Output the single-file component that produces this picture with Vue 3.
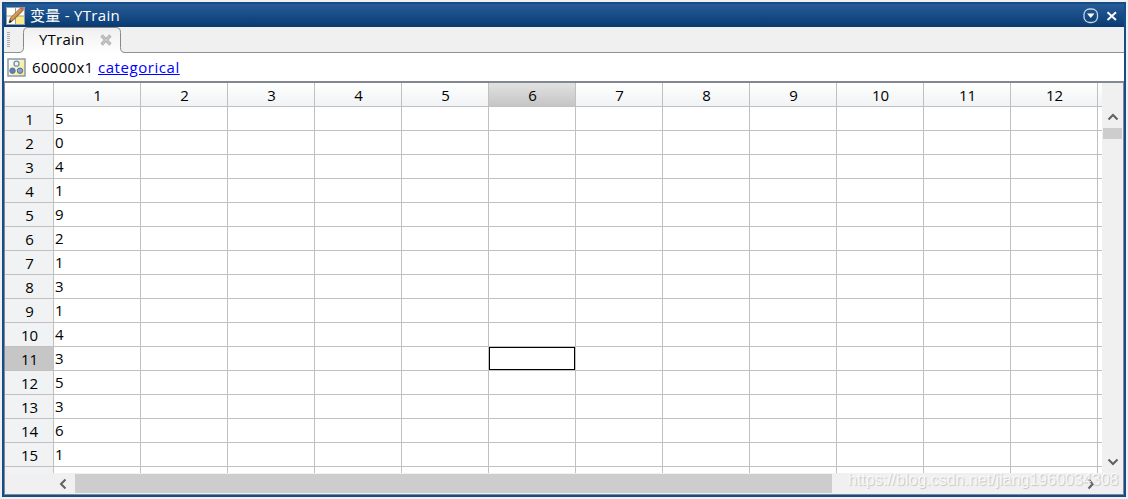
<template>
  <div class="desktop">
    <div class="window">
      <!-- Title bar -->
      <header class="titlebar">
        <svg class="title-icon" width="20" height="20" viewBox="0 0 20 20">
          <rect x="0.5" y="1.5" width="18" height="17" fill="#fffef0" stroke="#8ba0b0" />
          <path d="M10 10h8v8h-8z" fill="#fbe98a" />
          <path d="M1 10h17M9.500 2v16" stroke="#91a5a5" fill="none" />
          <path d="M3 16.500l1.500-4.500L14.500 2l2.500 2.500L7 14.500z" fill="#c98b43" stroke="#704524" stroke-width="0.8" />
          <path d="M5.500 12.500L15 3" stroke="#d9a35c" stroke-width="1.300" />
          <path d="M14 2.500l2-2 2.500 2.500-2 2z" fill="#c9676b" />
          <path d="M3 17l1-3 2 2z" fill="#222" />
        </svg>
        <span class="title-text">变量 - YTrain</span>
        <svg class="title-buttons" width="40" height="18" viewBox="0 0 40 18">
          <rect x="2" y="2" width="13.500" height="13.500" rx="5.500" fill="none" stroke="#c5d3e2" stroke-width="1.300" />
          <path d="M5 6.500h7.500L8.750 11z" fill="#fff" />
          <path d="M25.500 5.300l8.500 7.700M34 5.300l-8.500 7.700" stroke="#fff" stroke-width="1.900" />
        </svg>
      </header>

      <!-- Document tabs -->
      <nav class="tabs">
        <svg class="grip" width="4" height="16" viewBox="0 0 4 16">
          <path d="M1.500 0v16" stroke="#aaa" stroke-width="3" stroke-dasharray="1 1" />
        </svg>
        <div class="tab">
          <svg class="tab-shape" width="106" height="26" viewBox="0 0 106 26">
            <defs>
              <linearGradient id="tab-fill" x1="0" y1="0" x2="0" y2="1">
                <stop offset="0" stop-color="#efefef" />
                <stop offset="1" stop-color="#fff" />
              </linearGradient>
            </defs>
            <path
              d="M0 25.500c3-.3 4.500-1.500 4.500-5V5.500Q4.500 .5 9 .5H97Q101.500 .5 101.500 5.500V20.500c0 3.500 1.500 5 4.500 5V26H0z"
              fill="url(#tab-fill)"
            />
            <path
              d="M0 25.500c3-.3 4.500-1.500 4.500-5V5.500Q4.500 .5 9 .5H97Q101.500 .5 101.500 5.500V20.500c0 3.500 1.500 5 4.500 5"
              fill="none"
              stroke="#898989"
            />
          </svg>
          <span class="tab-label">YTrain</span>
          <svg class="tab-close" width="12" height="12" viewBox="0 0 12 12">
            <path d="M1.500 1.500l9 9M10.500 1.500l-9 9" stroke="#b4b4b4" stroke-width="3.200" />
            <path d="M2 2l8 8M10 2l-8 8" stroke="#cfcfcf" stroke-width="1" />
          </svg>
        </div>
      </nav>

      <!-- Variable summary -->
      <div class="summary">
        <svg width="19" height="19" viewBox="0 0 19 19">
          <defs>
            <linearGradient id="var-fill" x1="0" y1="0" x2="1" y2="0.6">
              <stop offset="0" stop-color="#fff" />
              <stop offset="1" stop-color="#fbe88e" />
            </linearGradient>
          </defs>
          <rect x="1" y="1" width="17" height="17" fill="url(#var-fill)" stroke="#8a9bad" stroke-width="1.500" />
          <circle cx="9.500" cy="5.700" r="2.500" fill="#edf5fb" stroke="#6d93bb" stroke-width="1.300" />
          <circle cx="5.500" cy="12.700" r="2.700" fill="#5e83b5" stroke="#4b6f9f" />
          <circle cx="13" cy="12.700" r="2.700" fill="#86a5ca" stroke="#4b6f9f" />
        </svg>
        <span class="size">60000x1</span>
        <a class="type">categorical</a>
      </div>

      <!-- Data grid with its scrollbars -->
      <main class="viewer">
        <div class="sheet">
          <div class="row head">
            <div class="corner"></div>
            <div v-for="col in columns" :key="col" class="cell" :class="{ active: col === activeCol }">
              {{ col }}
            </div>
            <div class="cell rest"></div>
          </div>
          <div v-for="(value, index) in values" :key="index" class="row">
            <div class="row-label" :class="{ active: index + 1 === activeRow }">{{ index + 1 }}</div>
            <div
              v-for="col in columns"
              :key="col"
              class="cell"
              :class="{ selected: index + 1 === activeRow && col === activeCol }"
            >
              {{ col === 1 ? value : '' }}
            </div>
            <div class="cell rest"></div>
          </div>
          <div class="row">
            <div class="row-label"></div>
            <div v-for="col in columns" :key="col" class="cell"></div>
            <div class="cell rest"></div>
          </div>
        </div>

        <div class="vbar">
          <svg width="12" height="8" viewBox="0 0 12 8"><path d="M1.500 6.500L6 2l4.500 4.500" /></svg>
          <div class="vthumb"></div>
          <svg class="down" width="12" height="8" viewBox="0 0 12 8"><path d="M1.500 1.500L6 6l4.500-4.500" /></svg>
        </div>

        <div class="hbar">
          <svg width="8" height="12" viewBox="0 0 8 12"><path d="M6.500 1.500L2 6l4.500 4.500" /></svg>
          <div class="hthumb"></div>
          <svg class="right" width="8" height="12" viewBox="0 0 8 12"><path d="M1.500 1.500L6 6l-4.500 4.500" /></svg>
        </div>
      </main>
    </div>
    <span class="watermark">https://blog.csdn.net/jiang1960034308</span>
  </div>
</template>

<script setup>
const columns = 12
const activeCol = 6
const activeRow = 11

// First fifteen labels of the training set
const values = [5, 0, 4, 1, 9, 2, 1, 3, 1, 4, 3, 5, 3, 6, 1]
</script>

<style>
body {
  margin: 0;
  background: #f0f0f0;
}
</style>

<style scoped>
.desktop {
  position: relative;
  box-sizing: border-box;
  width: 1128px;
  height: 499px;
  padding: 2px;
  overflow: hidden;
  background: #f0f0f0;
  color: #000;
  font-family: "Open Sans", "Noto Sans", "Noto Sans CJK SC", sans-serif;
  font-size: 15px;
}

.desktop * {
  box-sizing: border-box;
}

.window {
  display: flex;
  flex-direction: column;
  width: 1124px;
  height: 495px;
  border: 2px solid #154c8a;
  background: #fff;
}

.titlebar {
  display: flex;
  align-items: center;
  height: 23px;
  padding-left: 2px;
  background: linear-gradient(#275c98, #093b72);
  color: #fff;
}

.title-text {
  height: 23px;
  margin-left: 4px;
  letter-spacing: 0.3px;
  line-height: 22px;
}

.title-buttons {
  margin-left: auto;
  margin-right: 2px;
}

.tabs {
  display: flex;
  height: 26px;
  padding-left: 3px;
  border-bottom: 1px solid #919191;
  background: #f0f0f0;
}

.grip {
  margin-top: 5px;
}

.tab {
  position: relative;
  display: flex;
  align-items: center;
  width: 106px;
  height: 26px;
  margin-left: 8px;
  padding-left: 20px;
}

.tab-shape {
  position: absolute;
  top: 0;
  left: 0;
}

.tab-label,
.tab-close {
  position: relative;
}

.tab-label {
  width: 45px;
  padding-bottom: 2px;
  letter-spacing: 0.2px;
}

.tab-close {
  margin-left: 16px;
}

.summary {
  display: flex;
  align-items: center;
  height: 28px;
  padding-left: 3px;
}

.size {
  width: 66px;
  margin-left: 6px;
  letter-spacing: 0.3px;
}

.type {
  color: #0000ff;
  letter-spacing: 0.55px;
  text-decoration: underline;
}

.viewer {
  display: grid;
  flex: 1;
  grid-template-columns: 1097px 21px;
  grid-template-rows: 390px 21px;
  border: 1px solid #828790;
  border-top-width: 2px;
  background: #f0f0f0;
}

.sheet {
  overflow: hidden;
  background: #fff;
}

.row {
  display: grid;
  grid-template-columns: 49px repeat(12, 87px) 4px;
  grid-template-rows: 24px;
  height: 24px;
}

.corner,
.row-label,
.cell {
  border-right: 1px solid #c0c0c0;
  border-bottom: 1px solid #c0c0c0;
  line-height: 23px;
}

.cell {
  padding-left: 1px;
}

.rest {
  border-right: 0;
}

.head {
  background: linear-gradient(#fff, #f0f2f4);
}

.head .cell,
.row-label {
  padding: 0 0 0 1px;
  line-height: 25px;
  text-align: center;
}

.row-label {
  background: #f0f2f4;
}

.head .active {
  background: linear-gradient(#e1e1e1, #c5c5c5);
}

.row-label.active {
  background: #c6c6c6;
}

.selected {
  position: relative;
}

.selected::after {
  position: absolute;
  inset: 0;
  border: 1px solid #000;
  content: "";
}

.vbar {
  display: flex;
  flex-direction: column;
  align-items: center;
  padding: 30px 1px 7px;
}

.vthumb {
  width: 19px;
  height: 11px;
  margin-top: 7px;
  background: #cdcdcd;
}

.down {
  margin-top: auto;
}

.hbar {
  display: flex;
  grid-column: 1 / 3;
  align-items: center;
  padding-left: 54px;
}

.hthumb {
  width: 757px;
  height: 19px;
  margin-left: 8px;
  background: #cdcdcd;
}

.right {
  margin-left: auto;
  margin-right: 28px;
}

.vbar path,
.hbar path {
  fill: none;
  stroke: #606060;
  stroke-width: 2;
}

.watermark {
  position: absolute;
  top: 471px;
  left: 848px;
  color: rgba(255, 255, 255, 0.75);
  font-family: "Liberation Sans", sans-serif;
  font-size: 16px;
  line-height: 18px;
  text-shadow: 1px 1px 1px rgba(0, 0, 0, 0.18);
  white-space: nowrap;
}
</style>
